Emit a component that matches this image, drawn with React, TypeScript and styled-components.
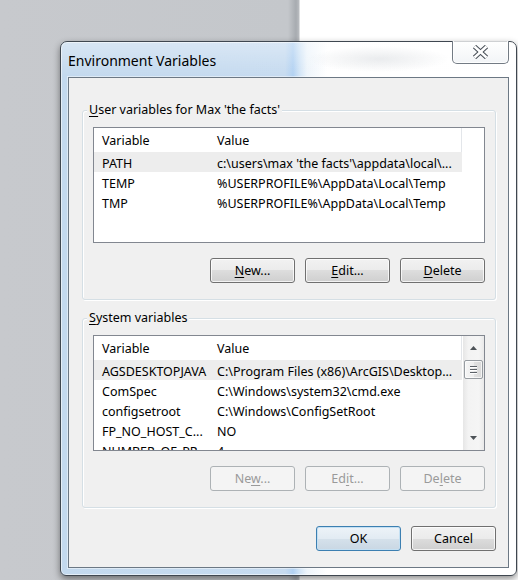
import React from "react";
import styled, { createGlobalStyle, css } from "styled-components";

const UI_FONT = `"Noto Sans", "Open Sans", "Liberation Sans", sans-serif`;

const GlobalStyle = createGlobalStyle`
  html, body { margin: 0; padding: 0; background: #c6c8cc; }
  body { width: 518px; height: 580px; overflow: hidden; }
  * { box-sizing: border-box; }
`;

const Desktop = styled.div`
  width: 518px;
  height: 580px;
  padding: 41px 0 0 60px;
  display: flex;
  align-items: flex-start;
  font-family: ${UI_FONT};
  background: linear-gradient(
    to right,
    #c7c9cd 0px,
    #c4c7cb 288px,
    #a7abb0 296px,
    #b9bcc0 299px,
    #ffffff 300px
  );
`;

const Window = styled.div`
  width: 457px;
  height: 535px;
  border: 1px solid #3f4750;
  border-radius: 7px 7px 6px 6px;
  padding: 0 7px 7px;
  display: flex;
  flex-direction: column;
  background: linear-gradient(
    to right,
    #c3d9ee 0px,
    #c6dbf0 224px,
    #b1d1f2 232px,
    #cfe3f6 238px,
    #eef5fb 246px,
    #ffffff 266px,
    #ffffff 100%
  );
  box-shadow: inset 0 0 0 1px rgba(255, 255, 255, 0.55),
    0 3px 7px rgba(0, 0, 0, 0.45);
`;

const TitleBar = styled.div`
  height: 35px;
  margin: 0 -7px;
  padding: 0 7px;
  display: flex;
  justify-content: space-between;
  align-items: flex-start;
  border-radius: 6px 6px 0 0;
  background: radial-gradient(
      ellipse 70px 13px at 318px 17px,
      rgba(185, 191, 198, 0.3),
      rgba(185, 191, 198, 0)
    ),
    linear-gradient(to bottom, rgba(255, 255, 255, 0.35), rgba(255, 255, 255, 0));
`;

const Title = styled.h1`
  margin: 10px 0 0 0;
  font: 400 14px/18px ${UI_FONT};
  color: #000;
`;

const CloseButton = styled.button`
  width: 57px;
  height: 23px;
  margin-top: -1px;
  padding: 0;
  border: 1px solid #737b84;
  border-top: none;
  border-radius: 0 0 5px 5px;
  background: linear-gradient(to bottom, rgba(255, 255, 255, 0.75), rgba(238, 241, 244, 0.75));
  box-shadow: inset 0 -1px 0 rgba(255, 255, 255, 0.85),
    inset 1px 0 0 rgba(255, 255, 255, 0.85), inset -1px 0 0 rgba(255, 255, 255, 0.85);
  display: flex;
  align-items: center;
  justify-content: center;
`;

const Client = styled.div`
  flex: 1;
  background: #f0f0f0;
  border: 1px solid #6c7884;
  box-shadow: 0 0 0 1px rgba(255, 255, 255, 0.45);
  padding: 24px 12px 16px 13px;
  display: flex;
  flex-direction: column;
`;

const Group = styled.fieldset`
  margin: 0;
  padding: 9px 10px 16px 10px;
  min-width: 0;
  border: 1px solid #d5dfe5;
  border-radius: 3px;
  box-shadow: inset 1px 1px 0 #fff, 1px 1px 0 #fff;
  & + & {
    margin-top: 10px;
  }
`;

const GroupLabel = styled.legend`
  padding: 0 2px;
  margin-left: -6px;
  font: 400 12.5px/16px ${UI_FONT};
  color: #000;
  background: #f0f0f0;
`;

const Key = styled.span`
  text-decoration: underline;
  text-underline-offset: 2px;
`;

const ListBox = styled.div`
  height: 116px;
  border: 1px solid #828790;
  background: #fff;
  display: flex;
  overflow: hidden;
`;

const ListMain = styled.div`
  flex: 1;
  min-width: 0;
  display: flex;
  flex-direction: column;
`;

const HeaderRow = styled.div`
  display: flex;
  height: 24px;
  flex: none;
`;

const HeaderCell = styled.div<{ $w: number; $divider?: boolean }>`
  width: ${(p) => p.$w}px;
  height: 24px;
  flex: none;
  padding: 3px 0 0 8px;
  font: 400 12.5px/20px ${UI_FONT};
  color: #000;
  overflow: hidden;
  ${(p) =>
    p.$divider &&
    css`
      border-right: 1px solid #e3e6ea;
    `}
`;

const Row = styled.div<{ $selected?: boolean }>`
  display: flex;
  height: 20px;
  flex: none;
  width: 368px;
  background: ${(p) => (p.$selected ? "#ededed" : "transparent")};
`;

const Cell = styled.div<{ $w: number }>`
  width: ${(p) => p.$w}px;
  height: 20px;
  flex: none;
  padding: 2px 0 0 8px;
  font: 400 12.5px/20px ${UI_FONT};
  color: #000;
  white-space: nowrap;
  overflow: hidden;
`;

const ScrollBar = styled.div`
  width: 21px;
  flex: none;
  display: flex;
  flex-direction: column;
  background: linear-gradient(to right, #e6e6e6, #f3f3f3 25%, #f5f5f5 75%, #e9e9e9);
`;

const ScrollArrow = styled.div`
  height: 24px;
  flex: none;
  display: flex;
  align-items: center;
  justify-content: center;
`;

const ScrollTrack = styled.div`
  flex: 1;
  padding: 0 1px;
`;

const Thumb = styled.div`
  height: 19px;
  border: 1px solid #979ca1;
  border-radius: 2px;
  background: linear-gradient(to right, #f6f6f6, #ededed 50%, #e2e2e2 50%, #d9d9d9);
  box-shadow: inset 0 0 0 1px rgba(255, 255, 255, 0.7);
  display: flex;
  flex-direction: column;
  align-items: center;
  justify-content: center;
  gap: 2px;
`;

const Grip = styled.span`
  width: 7px;
  height: 1px;
  background: #5d6268;
  box-shadow: 0 1px 0 #fff;
`;

const ButtonRow = styled.div<{ $top: number }>`
  display: flex;
  justify-content: flex-end;
  gap: 10px;
  margin-top: ${(p) => p.$top}px;
`;

const Button = styled.button<{ $default?: boolean }>`
  width: 85px;
  height: 25px;
  padding: 0;
  font: 400 12.5px/16px ${UI_FONT};
  color: #000;
  border: 1px solid #707070;
  border-radius: 3px;
  background: linear-gradient(#f2f2f2 0%, #ebebeb 50%, #dddddd 50%, #cfcfcf 100%);
  box-shadow: inset 0 0 0 1px rgba(255, 255, 255, 0.75);
  ${(p) =>
    p.$default &&
    css`
      border-color: #3c7fb1;
      background: linear-gradient(#edf3f8 0%, #e2ebf3 50%, #d5e1eb 50%, #c9d7e3 100%);
      box-shadow: inset 0 0 0 1px #c4e0f3;
    `}
  &:disabled {
    color: #9a9a9a;
    border-color: #adb2b5;
    background: #f4f4f4;
    box-shadow: none;
  }
`;

function CloseGlyph() {
  return (
    <svg width="17" height="14" viewBox="0 0 17 14">
      <g strokeLinecap="butt">
        <line x1="2.5" y1="1.5" x2="14.5" y2="12.5" stroke="#454c54" strokeWidth="4.6" />
        <line x1="14.5" y1="1.5" x2="2.5" y2="12.5" stroke="#454c54" strokeWidth="4.6" />
        <line x1="2.5" y1="1.5" x2="14.5" y2="12.5" stroke="#ffffff" strokeWidth="2.5" />
        <line x1="14.5" y1="1.5" x2="2.5" y2="12.5" stroke="#ffffff" strokeWidth="2.5" />
      </g>
    </svg>
  );
}

function ArrowGlyph({ down }: { down?: boolean }) {
  return (
    <svg width="7" height="4" viewBox="0 0 7 4">
      <polygon points={down ? "0,0 7,0 3.5,4" : "0,4 7,4 3.5,0"} fill="#4e5358" />
    </svg>
  );
}

type Item = { name: string; value: string; selected?: boolean };

const userVars: Item[] = [
  { name: "PATH", value: "c:\\users\\max 'the facts'\\appdata\\local\\...", selected: true },
  { name: "TEMP", value: "%USERPROFILE%\\AppData\\Local\\Temp" },
  { name: "TMP", value: "%USERPROFILE%\\AppData\\Local\\Temp" },
];

const systemVars: Item[] = [
  { name: "AGSDESKTOPJAVA", value: "C:\\Program Files (x86)\\ArcGIS\\Desktop...", selected: true },
  { name: "ComSpec", value: "C:\\Windows\\system32\\cmd.exe" },
  { name: "configsetroot", value: "C:\\Windows\\ConfigSetRoot" },
  { name: "FP_NO_HOST_C...", value: "NO" },
  { name: "NUMBER_OF_PR...", value: "4" },
];

function VariableList({ items, scroll }: { items: Item[]; scroll?: boolean }) {
  return (
    <ListBox>
      <ListMain>
        <HeaderRow>
          <HeaderCell $w={115}>Variable</HeaderCell>
          <HeaderCell $w={253} $divider>
            Value
          </HeaderCell>
        </HeaderRow>
        {items.map((it) => (
          <Row key={it.name} $selected={it.selected}>
            <Cell $w={115}>{it.name}</Cell>
            <Cell $w={253}>{it.value}</Cell>
          </Row>
        ))}
      </ListMain>
      {scroll && (
        <ScrollBar>
          <ScrollArrow>
            <ArrowGlyph />
          </ScrollArrow>
          <ScrollTrack>
            <Thumb>
              <Grip />
              <Grip />
              <Grip />
            </Thumb>
          </ScrollTrack>
          <ScrollArrow>
            <ArrowGlyph down />
          </ScrollArrow>
        </ScrollBar>
      )}
    </ListBox>
  );
}

export default function App() {
  return (
    <>
      <GlobalStyle />
      <Desktop>
        <Window>
          <TitleBar>
            <Title>Environment Variables</Title>
            <CloseButton aria-label="Close">
              <CloseGlyph />
            </CloseButton>
          </TitleBar>
          <Client>
            <Group>
              <GroupLabel>
                <Key>U</Key>ser variables for Max 'the facts'
              </GroupLabel>
              <VariableList items={userVars} />
              <ButtonRow $top={15}>
                <Button>
                  <Key>N</Key>ew...
                </Button>
                <Button>
                  <Key>E</Key>dit...
                </Button>
                <Button>
                  <Key>D</Key>elete
                </Button>
              </ButtonRow>
            </Group>
            <Group>
              <GroupLabel>
                <Key>S</Key>ystem variables
              </GroupLabel>
              <VariableList items={systemVars} scroll />
              <ButtonRow $top={15}>
                <Button disabled>
                  Ne<Key>w</Key>...
                </Button>
                <Button disabled>
                  Ed<Key>i</Key>t...
                </Button>
                <Button disabled>
                  De<Key>l</Key>ete
                </Button>
              </ButtonRow>
            </Group>
            <ButtonRow $top={18}>
              <Button $default>OK</Button>
              <Button>Cancel</Button>
            </ButtonRow>
          </Client>
        </Window>
      </Desktop>
    </>
  );
}
